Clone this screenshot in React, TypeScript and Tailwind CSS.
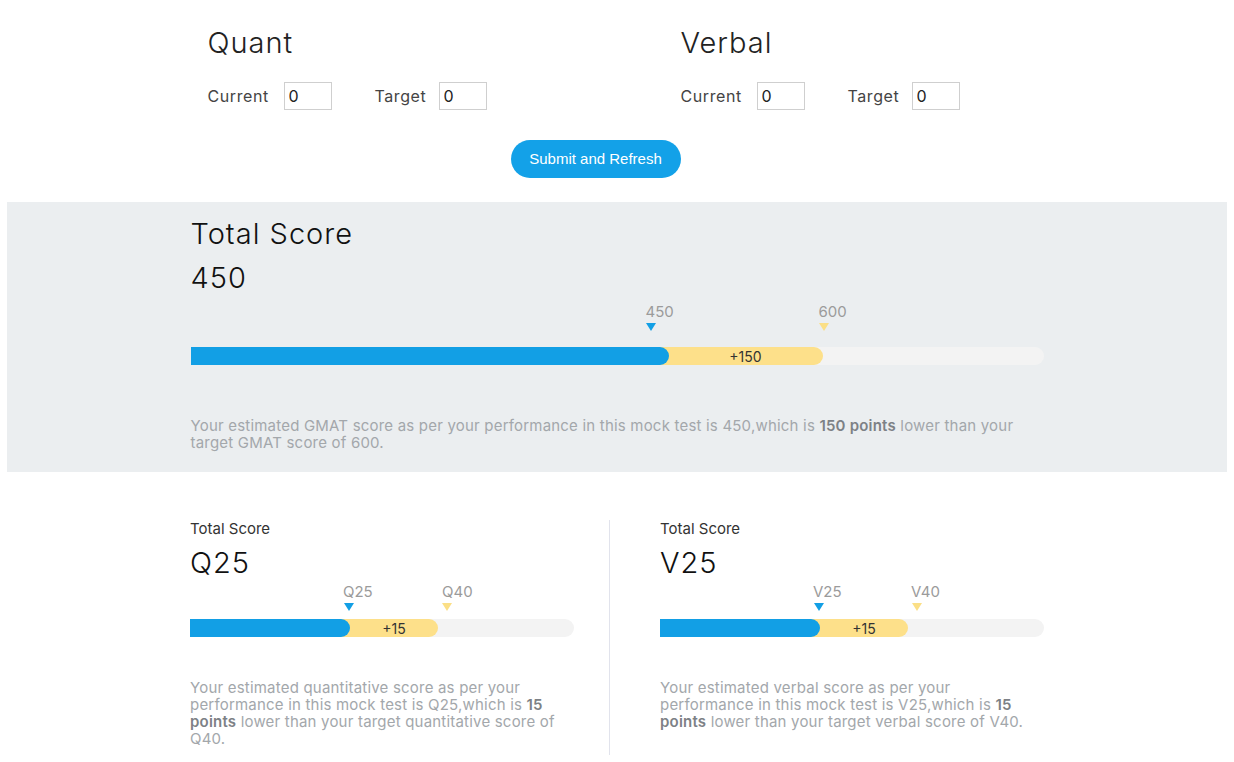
import React from "react";

type BarProps = {
  width: number;
  blue: number;
  yellow: number;
  head: number;
  current: { label: string; tri: number; text: number };
  target: { label: string; tri: number; text: number };
  diff: string;
};

function Triangle({ color }: { color: string }) {
  return (
    <svg width="10" height="8" viewBox="0 0 10 8" className="block">
      <polygon points="0,0 10,0 5,8" fill={color} />
    </svg>
  );
}

function ScoreBar({ width, blue, yellow, head, current, target, diff }: BarProps) {
  return (
    <div style={{ width }}>
      {/* markers */}
      <div className="relative" style={{ height: head }}>
        <span
          className="absolute top-0 text-[15px] leading-none text-[#9b9b9b]"
          style={{ left: current.text }}
        >
          {current.label}
        </span>
        <span className="absolute top-[19px]" style={{ left: current.tri - 5 }}>
          <Triangle color="#129fe5" />
        </span>
        <span
          className="absolute top-0 text-[15px] leading-none text-[#9b9b9b]"
          style={{ left: target.text }}
        >
          {target.label}
        </span>
        <span className="absolute top-[19px]" style={{ left: target.tri - 5 }}>
          <Triangle color="#fbdf86" />
        </span>
      </div>
      {/* track */}
      <div className="relative h-[18px] rounded-full bg-[#f3f3f3]">
        <div
          className="absolute inset-y-0 left-0 flex items-center justify-end rounded-r-full bg-[#fde08a] text-[14px] text-[#333]"
          style={{ width: yellow }}
        >
          <span className="text-center" style={{ width: yellow - blue }}>
            {diff}
          </span>
        </div>
        <div
          className="absolute inset-y-0 left-0 rounded-r-full bg-[#129fe5]"
          style={{ width: blue }}
        />
      </div>
    </div>
  );
}

function Subject({ title, className }: { title: string; className?: string }) {
  return (
    <div className={className}>
      <h2 className="text-[29px] font-light leading-[34px] tracking-[1px] text-[#222]">
        {title}
      </h2>
      <div className="mt-[22px] flex items-center text-[16px] tracking-[0.6px] text-[#444]">
        <span className="w-[76px]">Current</span>
        <input
          defaultValue="0"
          className="h-[28px] w-[48px] border border-[#cfcfcf] px-[4px] text-[16px] text-[#222] outline-none"
        />
        <span className="ml-[43px] w-[64px]">Target</span>
        <input
          defaultValue="0"
          className="h-[28px] w-[48px] border border-[#cfcfcf] px-[4px] text-[16px] text-[#222] outline-none"
        />
      </div>
    </div>
  );
}

function SubScore({
  value,
  bar,
  children,
}: {
  value: string;
  bar: BarProps;
  children: React.ReactNode;
}) {
  return (
    <div className="w-[384px]">
      <p className="text-[15px] leading-[18px] text-[#333]">Total Score</p>
      <p className="mt-[8px] text-[29px] font-light leading-[34px] tracking-[1px] text-[#111]">
        {value}
      </p>
      <div className="mt-[4px]">
        <ScoreBar {...bar} />
      </div>
      <p className="mt-[42px] w-[374px] text-[15px] leading-[17px] tracking-[0.2px] text-[#a3a7ab]">
        {children}
      </p>
    </div>
  );
}

export default function App() {
  return (
    <div className="min-h-screen bg-white font-['Inter',sans-serif]">
      <div className="mx-auto w-[853px] pt-[26px]">
        <div className="flex">
          <Subject title="Quant" className="ml-[17px] w-[473px]" />
          <Subject title="Verbal" />
        </div>
        <div className="ml-[320px] mt-[30px]">
          <button className="h-[38px] w-[170px] rounded-full bg-[#13a1e8] font-['Liberation_Sans',sans-serif] text-[15px] text-white">
            Submit and Refresh
          </button>
        </div>
      </div>

      {/* Total score band */}
      <section className="mx-[7px] mt-[24px] h-[270px] bg-[#ebeef0]">
        <div className="mx-auto w-[853px] pt-[15px]">
          <h2 className="text-[29px] font-light leading-[34px] tracking-[1px] text-[#111]">
            Total Score
          </h2>
          <p className="mt-[10px] text-[29px] font-light leading-[34px] tracking-[1px] text-[#111]">
            450
          </p>
          <div className="mt-[9px]">
            <ScoreBar
              width={853}
              blue={478}
              yellow={632}
              head={43}
              current={{ label: "450", tri: 460, text: 455 }}
              target={{ label: "600", tri: 633, text: 628 }}
              diff="+150"
            />
          </div>
          <p className="mt-[52px] w-[830px] text-[15px] leading-[17px] tracking-[0.2px] text-[#a3a7ab]">
            Your estimated GMAT score as per your performance in this mock test
            is 450,which is{" "}
            <span className="font-semibold text-[#7d8186]">150 points</span>{" "}
            lower than your target GMAT score of 600.
          </p>
        </div>
      </section>

      {/* Sectional scores */}
      <div className="mx-auto mt-[48px] flex w-[854px]">
        <SubScore
          value="Q25"
          bar={{
            width: 384,
            blue: 160,
            yellow: 248,
            head: 35,
            current: { label: "Q25", tri: 159, text: 153 },
            target: { label: "Q40", tri: 257, text: 252 },
            diff: "+15",
          }}
        >
          Your estimated quantitative score as per your performance in this mock
          test is Q25,which is{" "}
          <span className="font-semibold text-[#7d8186]">15 points</span> lower
          than your target quantitative score of Q40.
        </SubScore>
        <div className="ml-[35px] mr-[50px] h-[235px] w-px bg-[#e1e3ec]" />
        <SubScore
          value="V25"
          bar={{
            width: 384,
            blue: 160,
            yellow: 248,
            head: 35,
            current: { label: "V25", tri: 159, text: 153 },
            target: { label: "V40", tri: 257, text: 251 },
            diff: "+15",
          }}
        >
          Your estimated verbal score as per your performance in this mock test
          is V25,which is{" "}
          <span className="font-semibold text-[#7d8186]">15 points</span> lower
          than your target verbal score of V40.
        </SubScore>
      </div>
    </div>
  );
}
